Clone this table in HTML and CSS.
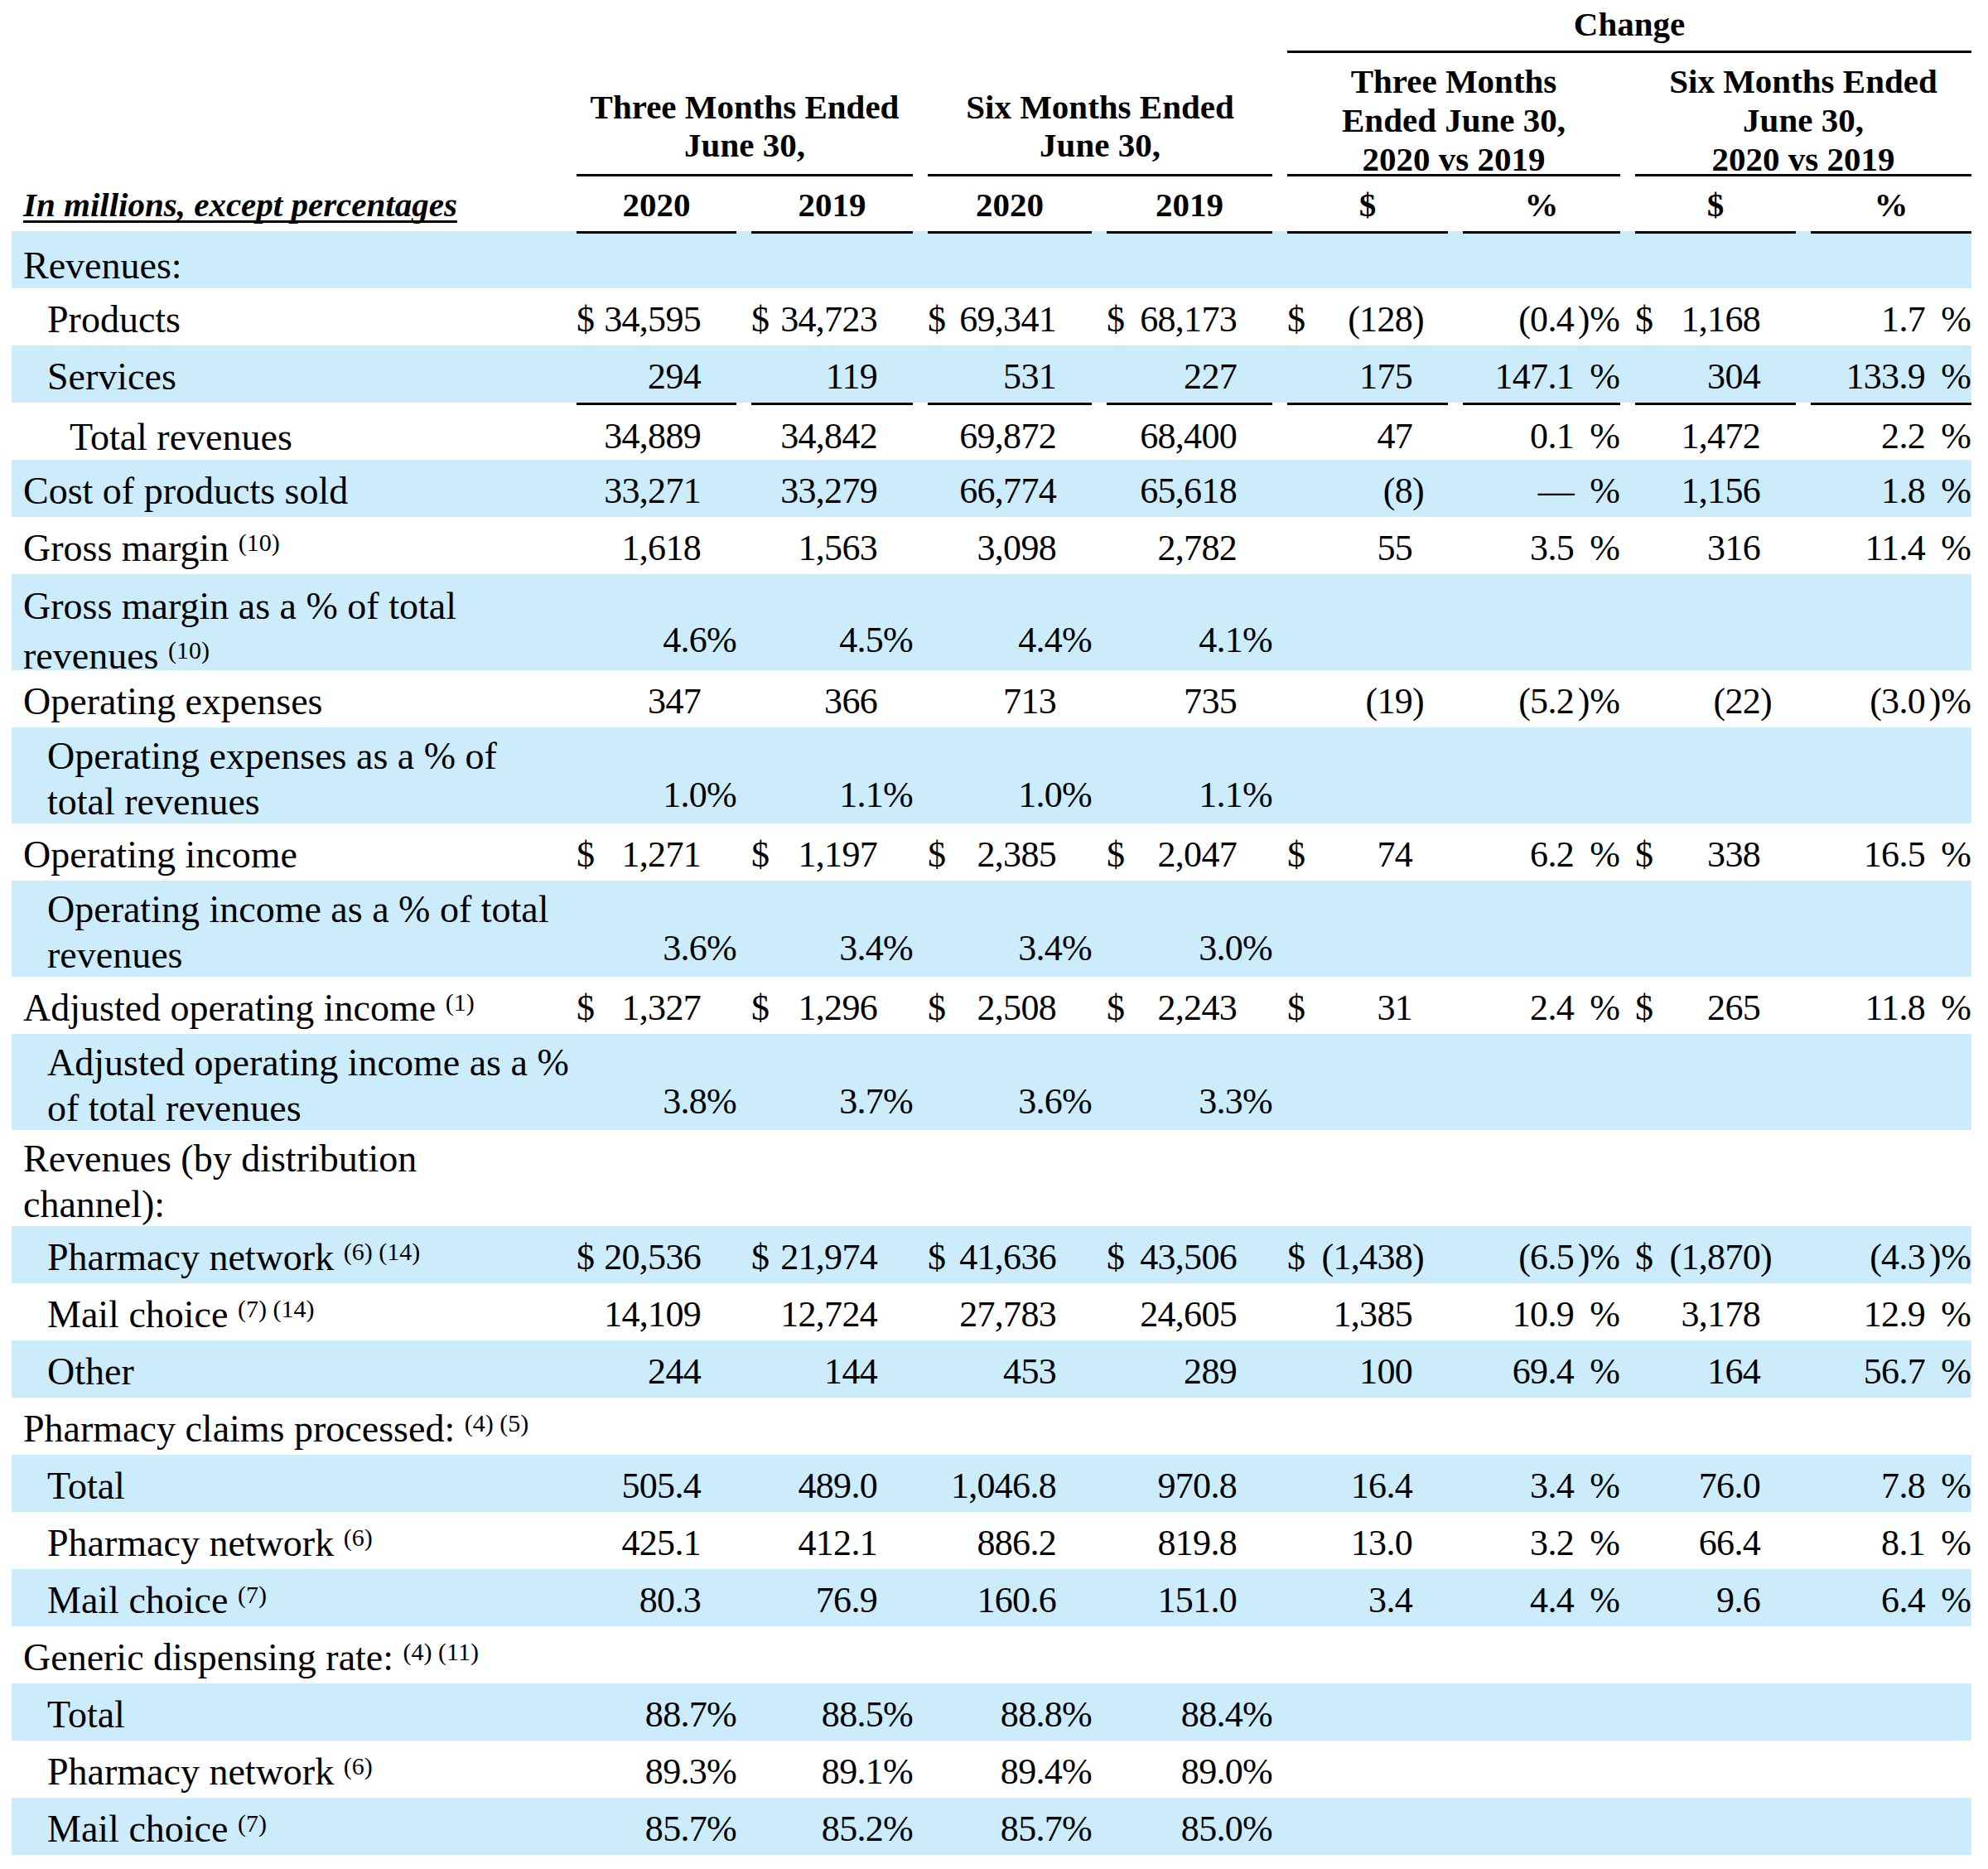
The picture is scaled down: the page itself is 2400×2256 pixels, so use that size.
FILE: index.html
```html
<!DOCTYPE html>
<html lang="en">
<head>
<meta charset="utf-8">
<title>Segment results</title>
<link rel="stylesheet" href="styles.css">
</head>
<body>
<div class="tbl">
  <div class="grid head">
    <div class="chg">Change</div>
    <div class="grp g1">Three Months Ended<br>June 30,</div>
    <div class="grp g2">Six Months Ended<br>June 30,</div>
    <div class="grp gc g3">Three Months<br>Ended June 30,<br>2020 vs 2019</div>
    <div class="grp gc g4">Six Months Ended<br>June 30,<br>2020 vs 2019</div>
    <div class="hl"><span>In millions, except percentages</span></div>
    <div class="hc">2020</div>
    <div class="hc">2019</div>
    <div class="hc">2020</div>
    <div class="hc">2019</div>
    <div class="hc">$</div>
    <div class="hc">%</div>
    <div class="hc">$</div>
    <div class="hc">%</div>
  </div>

  <div class="row grid shade ruled">
    <div class="lbl">Revenues:</div>
    <div class="v"></div><div class="v"></div><div class="v"></div><div class="v"></div>
    <div class="v"></div><div class="v"></div><div class="v"></div><div class="v"></div>
  </div>

  <div class="row grid">
    <div class="lbl i1">Products</div>
    <div class="v"><span class="d">$</span><span class="n">34,595</span></div>
    <div class="v"><span class="d">$</span><span class="n">34,723</span></div>
    <div class="v"><span class="d">$</span><span class="n">69,341</span></div>
    <div class="v"><span class="d">$</span><span class="n">68,173</span></div>
    <div class="v"><span class="d">$</span><span class="n">(128</span><span class="s">)</span></div>
    <div class="v"><span class="n">(0.4</span><span class="s">)%</span></div>
    <div class="v"><span class="d">$</span><span class="n">1,168</span></div>
    <div class="v"><span class="n">1.7</span><span class="s">%</span></div>
  </div>

  <div class="row grid shade">
    <div class="lbl i1">Services</div>
    <div class="v"><span class="n">294</span></div>
    <div class="v"><span class="n">119</span></div>
    <div class="v"><span class="n">531</span></div>
    <div class="v"><span class="n">227</span></div>
    <div class="v"><span class="n">175</span></div>
    <div class="v"><span class="n">147.1</span><span class="s">%</span></div>
    <div class="v"><span class="n">304</span></div>
    <div class="v"><span class="n">133.9</span><span class="s">%</span></div>
  </div>

  <div class="row grid ruled">
    <div class="lbl i2">Total revenues</div>
    <div class="v"><span class="n">34,889</span></div>
    <div class="v"><span class="n">34,842</span></div>
    <div class="v"><span class="n">69,872</span></div>
    <div class="v"><span class="n">68,400</span></div>
    <div class="v"><span class="n">47</span></div>
    <div class="v"><span class="n">0.1</span><span class="s">%</span></div>
    <div class="v"><span class="n">1,472</span></div>
    <div class="v"><span class="n">2.2</span><span class="s">%</span></div>
  </div>

  <div class="row grid shade">
    <div class="lbl">Cost of products sold</div>
    <div class="v"><span class="n">33,271</span></div>
    <div class="v"><span class="n">33,279</span></div>
    <div class="v"><span class="n">66,774</span></div>
    <div class="v"><span class="n">65,618</span></div>
    <div class="v"><span class="n">(8</span><span class="s">)</span></div>
    <div class="v"><span class="n">—</span><span class="s">%</span></div>
    <div class="v"><span class="n">1,156</span></div>
    <div class="v"><span class="n">1.8</span><span class="s">%</span></div>
  </div>

  <div class="row grid">
    <div class="lbl">Gross margin <sup>(10)</sup></div>
    <div class="v"><span class="n">1,618</span></div>
    <div class="v"><span class="n">1,563</span></div>
    <div class="v"><span class="n">3,098</span></div>
    <div class="v"><span class="n">2,782</span></div>
    <div class="v"><span class="n">55</span></div>
    <div class="v"><span class="n">3.5</span><span class="s">%</span></div>
    <div class="v"><span class="n">316</span></div>
    <div class="v"><span class="n">11.4</span><span class="s">%</span></div>
  </div>

  <div class="row grid shade double tall">
    <div class="lbl">Gross margin as a % of total<br>revenues <sup>(10)</sup></div>
    <div class="v p"><span class="n">4.6%</span></div>
    <div class="v p"><span class="n">4.5%</span></div>
    <div class="v p"><span class="n">4.4%</span></div>
    <div class="v p"><span class="n">4.1%</span></div>
  </div>

  <div class="row grid">
    <div class="lbl">Operating expenses</div>
    <div class="v"><span class="n">347</span></div>
    <div class="v"><span class="n">366</span></div>
    <div class="v"><span class="n">713</span></div>
    <div class="v"><span class="n">735</span></div>
    <div class="v"><span class="n">(19</span><span class="s">)</span></div>
    <div class="v"><span class="n">(5.2</span><span class="s">)%</span></div>
    <div class="v"><span class="n">(22</span><span class="s">)</span></div>
    <div class="v"><span class="n">(3.0</span><span class="s">)%</span></div>
  </div>

  <div class="row grid shade double">
    <div class="lbl i1">Operating expenses as a % of<br>total revenues</div>
    <div class="v p"><span class="n">1.0%</span></div>
    <div class="v p"><span class="n">1.1%</span></div>
    <div class="v p"><span class="n">1.0%</span></div>
    <div class="v p"><span class="n">1.1%</span></div>
  </div>

  <div class="row grid">
    <div class="lbl">Operating income</div>
    <div class="v"><span class="d">$</span><span class="n">1,271</span></div>
    <div class="v"><span class="d">$</span><span class="n">1,197</span></div>
    <div class="v"><span class="d">$</span><span class="n">2,385</span></div>
    <div class="v"><span class="d">$</span><span class="n">2,047</span></div>
    <div class="v"><span class="d">$</span><span class="n">74</span></div>
    <div class="v"><span class="n">6.2</span><span class="s">%</span></div>
    <div class="v"><span class="d">$</span><span class="n">338</span></div>
    <div class="v"><span class="n">16.5</span><span class="s">%</span></div>
  </div>

  <div class="row grid shade double">
    <div class="lbl i1">Operating income as a % of total<br>revenues</div>
    <div class="v p"><span class="n">3.6%</span></div>
    <div class="v p"><span class="n">3.4%</span></div>
    <div class="v p"><span class="n">3.4%</span></div>
    <div class="v p"><span class="n">3.0%</span></div>
  </div>

  <div class="row grid">
    <div class="lbl">Adjusted operating income <sup>(1)</sup></div>
    <div class="v"><span class="d">$</span><span class="n">1,327</span></div>
    <div class="v"><span class="d">$</span><span class="n">1,296</span></div>
    <div class="v"><span class="d">$</span><span class="n">2,508</span></div>
    <div class="v"><span class="d">$</span><span class="n">2,243</span></div>
    <div class="v"><span class="d">$</span><span class="n">31</span></div>
    <div class="v"><span class="n">2.4</span><span class="s">%</span></div>
    <div class="v"><span class="d">$</span><span class="n">265</span></div>
    <div class="v"><span class="n">11.8</span><span class="s">%</span></div>
  </div>

  <div class="row grid shade double">
    <div class="lbl i1">Adjusted operating income as a %<br>of total revenues</div>
    <div class="v p"><span class="n">3.8%</span></div>
    <div class="v p"><span class="n">3.7%</span></div>
    <div class="v p"><span class="n">3.6%</span></div>
    <div class="v p"><span class="n">3.3%</span></div>
  </div>

  <div class="row grid double">
    <div class="lbl">Revenues (by distribution<br>channel):</div>
  </div>

  <div class="row grid shade">
    <div class="lbl i1">Pharmacy network <sup>(6) (14)</sup></div>
    <div class="v"><span class="d">$</span><span class="n">20,536</span></div>
    <div class="v"><span class="d">$</span><span class="n">21,974</span></div>
    <div class="v"><span class="d">$</span><span class="n">41,636</span></div>
    <div class="v"><span class="d">$</span><span class="n">43,506</span></div>
    <div class="v"><span class="d">$</span><span class="n">(1,438</span><span class="s">)</span></div>
    <div class="v"><span class="n">(6.5</span><span class="s">)%</span></div>
    <div class="v"><span class="d">$</span><span class="n">(1,870</span><span class="s">)</span></div>
    <div class="v"><span class="n">(4.3</span><span class="s">)%</span></div>
  </div>

  <div class="row grid">
    <div class="lbl i1">Mail choice <sup>(7) (14)</sup></div>
    <div class="v"><span class="n">14,109</span></div>
    <div class="v"><span class="n">12,724</span></div>
    <div class="v"><span class="n">27,783</span></div>
    <div class="v"><span class="n">24,605</span></div>
    <div class="v"><span class="n">1,385</span></div>
    <div class="v"><span class="n">10.9</span><span class="s">%</span></div>
    <div class="v"><span class="n">3,178</span></div>
    <div class="v"><span class="n">12.9</span><span class="s">%</span></div>
  </div>

  <div class="row grid shade">
    <div class="lbl i1">Other</div>
    <div class="v"><span class="n">244</span></div>
    <div class="v"><span class="n">144</span></div>
    <div class="v"><span class="n">453</span></div>
    <div class="v"><span class="n">289</span></div>
    <div class="v"><span class="n">100</span></div>
    <div class="v"><span class="n">69.4</span><span class="s">%</span></div>
    <div class="v"><span class="n">164</span></div>
    <div class="v"><span class="n">56.7</span><span class="s">%</span></div>
  </div>

  <div class="row grid">
    <div class="lbl">Pharmacy claims processed: <sup>(4) (5)</sup></div>
  </div>

  <div class="row grid shade">
    <div class="lbl i1">Total</div>
    <div class="v"><span class="n">505.4</span></div>
    <div class="v"><span class="n">489.0</span></div>
    <div class="v"><span class="n">1,046.8</span></div>
    <div class="v"><span class="n">970.8</span></div>
    <div class="v"><span class="n">16.4</span></div>
    <div class="v"><span class="n">3.4</span><span class="s">%</span></div>
    <div class="v"><span class="n">76.0</span></div>
    <div class="v"><span class="n">7.8</span><span class="s">%</span></div>
  </div>

  <div class="row grid">
    <div class="lbl i1">Pharmacy network <sup>(6)</sup></div>
    <div class="v"><span class="n">425.1</span></div>
    <div class="v"><span class="n">412.1</span></div>
    <div class="v"><span class="n">886.2</span></div>
    <div class="v"><span class="n">819.8</span></div>
    <div class="v"><span class="n">13.0</span></div>
    <div class="v"><span class="n">3.2</span><span class="s">%</span></div>
    <div class="v"><span class="n">66.4</span></div>
    <div class="v"><span class="n">8.1</span><span class="s">%</span></div>
  </div>

  <div class="row grid shade">
    <div class="lbl i1">Mail choice <sup>(7)</sup></div>
    <div class="v"><span class="n">80.3</span></div>
    <div class="v"><span class="n">76.9</span></div>
    <div class="v"><span class="n">160.6</span></div>
    <div class="v"><span class="n">151.0</span></div>
    <div class="v"><span class="n">3.4</span></div>
    <div class="v"><span class="n">4.4</span><span class="s">%</span></div>
    <div class="v"><span class="n">9.6</span></div>
    <div class="v"><span class="n">6.4</span><span class="s">%</span></div>
  </div>

  <div class="row grid">
    <div class="lbl">Generic dispensing rate: <sup>(4) (11)</sup></div>
  </div>

  <div class="row grid shade">
    <div class="lbl i1">Total</div>
    <div class="v p"><span class="n">88.7%</span></div>
    <div class="v p"><span class="n">88.5%</span></div>
    <div class="v p"><span class="n">88.8%</span></div>
    <div class="v p"><span class="n">88.4%</span></div>
  </div>

  <div class="row grid">
    <div class="lbl i1">Pharmacy network <sup>(6)</sup></div>
    <div class="v p"><span class="n">89.3%</span></div>
    <div class="v p"><span class="n">89.1%</span></div>
    <div class="v p"><span class="n">89.4%</span></div>
    <div class="v p"><span class="n">89.0%</span></div>
  </div>

  <div class="row grid shade">
    <div class="lbl i1">Mail choice <sup>(7)</sup></div>
    <div class="v p"><span class="n">85.7%</span></div>
    <div class="v p"><span class="n">85.2%</span></div>
    <div class="v p"><span class="n">85.7%</span></div>
    <div class="v p"><span class="n">85.0%</span></div>
  </div>
</div>
</body>
</html>
```

FILE: styles.css
```css
html, body {
  margin: 0;
  padding: 0;
  background: #ffffff;
}

body {
  font-family: "Liberation Serif", "Times New Roman", serif;
  color: #000000;
}

.tbl {
  padding-left: 14px;
  width: 2366px;
}

.grid {
  display: grid;
  grid-template-columns: 664px 193px 195px 198px 200px 194px 190px 194px 194px;
  column-gap: 18px;
}

/* ---------- header ---------- */
.head {
  grid-template-rows: 64px 149px 66px;
  font-weight: bold;
  font-size: 41px;
  text-align: center;
}

.chg {
  grid-row: 1;
  grid-column: 6 / 10;
  padding-top: 5px;
  line-height: 48px;
  border-bottom: 3px solid #000;
}

.grp {
  grid-row: 2;
  border-bottom: 3px solid #000;
  padding-top: 42px;
  line-height: 46px;
  white-space: nowrap;
}

.grp.gc {
  padding-top: 11px;
  line-height: 47px;
}

.g1 { grid-column: 2 / 4; }
.g2 { grid-column: 4 / 6; }
.g3 { grid-column: 6 / 8; }
.g4 { grid-column: 8 / 10; }

.hl {
  grid-row: 3;
  grid-column: 1;
  text-align: left;
  padding-left: 14px;
  padding-top: 10px;
  line-height: 48px;
  font-style: italic;
  white-space: nowrap;
}

.hl span {
  text-decoration: underline;
  text-decoration-thickness: 3px;
  text-underline-offset: 5px;
  text-decoration-skip-ink: none;
}

.hc {
  grid-row: 3;
  padding-top: 10px;
  line-height: 48px;
}

/* ---------- body rows ---------- */
.row {
  height: 69px;
  align-items: start;
}

.row.double {
  height: 116px;
}

.shade {
  background: #ccecfc;
}

.lbl {
  padding-left: 14px;
  padding-top: 13px;
  font-size: 46px;
  line-height: 50px;
  white-space: nowrap;
}

.lbl.i1 { padding-left: 43px; }
.lbl.i2 { padding-left: 70px; }

sup {
  font-size: 30px;
  line-height: 0;
  vertical-align: 12px;
}

.v {
  display: grid;
  grid-template-columns: auto 1fr 43px;
  padding-top: 13px;
  font-size: 44px;
  line-height: 50px;
  letter-spacing: -0.7px;
  white-space: nowrap;
}

.v .d { grid-column: 1; }
.v .n { grid-column: 2; text-align: right; }
.v .s { grid-column: 3; text-align: left; }

/* change-% columns keep a wider suffix slot, right aligned */
.row > .v:nth-child(7),
.row > .v:nth-child(9) {
  grid-template-columns: auto 1fr 56px;
}

.row > .v:nth-child(7) .s,
.row > .v:nth-child(9) .s {
  text-align: right;
  letter-spacing: 0;
}

.v.p {
  grid-template-columns: auto 1fr 0;
}

.double .lbl {
  padding-top: 7px;
  line-height: 55px;
}

.double .v {
  padding-top: 57px;
}

.tall .lbl {
  padding-top: 9px;
  line-height: 60px;
}

.tall .v {
  padding-top: 55px;
}

.ruled .lbl {
  padding-top: 17px;
}

.ruled .v {
  border-top: 3px solid #000;
  padding-top: 13px;
  min-height: 66px;
  box-sizing: border-box;
}
```
